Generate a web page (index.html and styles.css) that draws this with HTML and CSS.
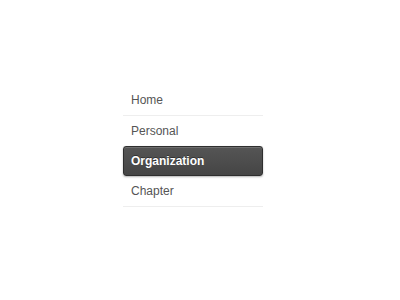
FILE: index.html
```html
<!DOCTYPE html>
<html>
<head>
<meta charset="utf-8">
<link rel="stylesheet" href="styles.css">
</head>
<body>
<ul class="nav">
  <li class="item"><a href="#">Home</a></li>
  <li class="item"><a href="#">Personal</a></li>
  <li class="item active"><a href="#">Organization</a></li>
  <li class="item"><a href="#">Chapter</a></li>
</ul>
</body>
</html>
```
FILE: styles.css
```css
html, body {
  margin: 0;
  padding: 0;
  background: #fff;
}
.nav {
  list-style: none;
  margin: 0;
  padding: 85px 0 0 123px;
  width: 140px;
  font-family: "Liberation Sans", Arial, sans-serif;
  font-size: 12px;
}
.item {
  border-bottom: 1px solid #eeeeee;
}
.item a {
  display: block;
  height: 30px;
  line-height: 30px;
  padding: 0 8px;
  color: #555555;
  text-decoration: none;
}
.item.active {
  border-bottom: none;
  margin-top: -1px;
}
.item.active a {
  height: 28px;
  line-height: 28px;
  padding: 0 7px;
  border: 1px solid #2e2e2e;
  border-radius: 3px;
  background: linear-gradient(#555555, #454545);
  box-shadow: inset 0 1px 0 rgba(255,255,255,0.15), 0 1px 2px rgba(0,0,0,0.3);
  color: #ffffff;
  font-weight: bold;
  text-shadow: 0 -1px 0 rgba(0,0,0,0.4);
}
```
